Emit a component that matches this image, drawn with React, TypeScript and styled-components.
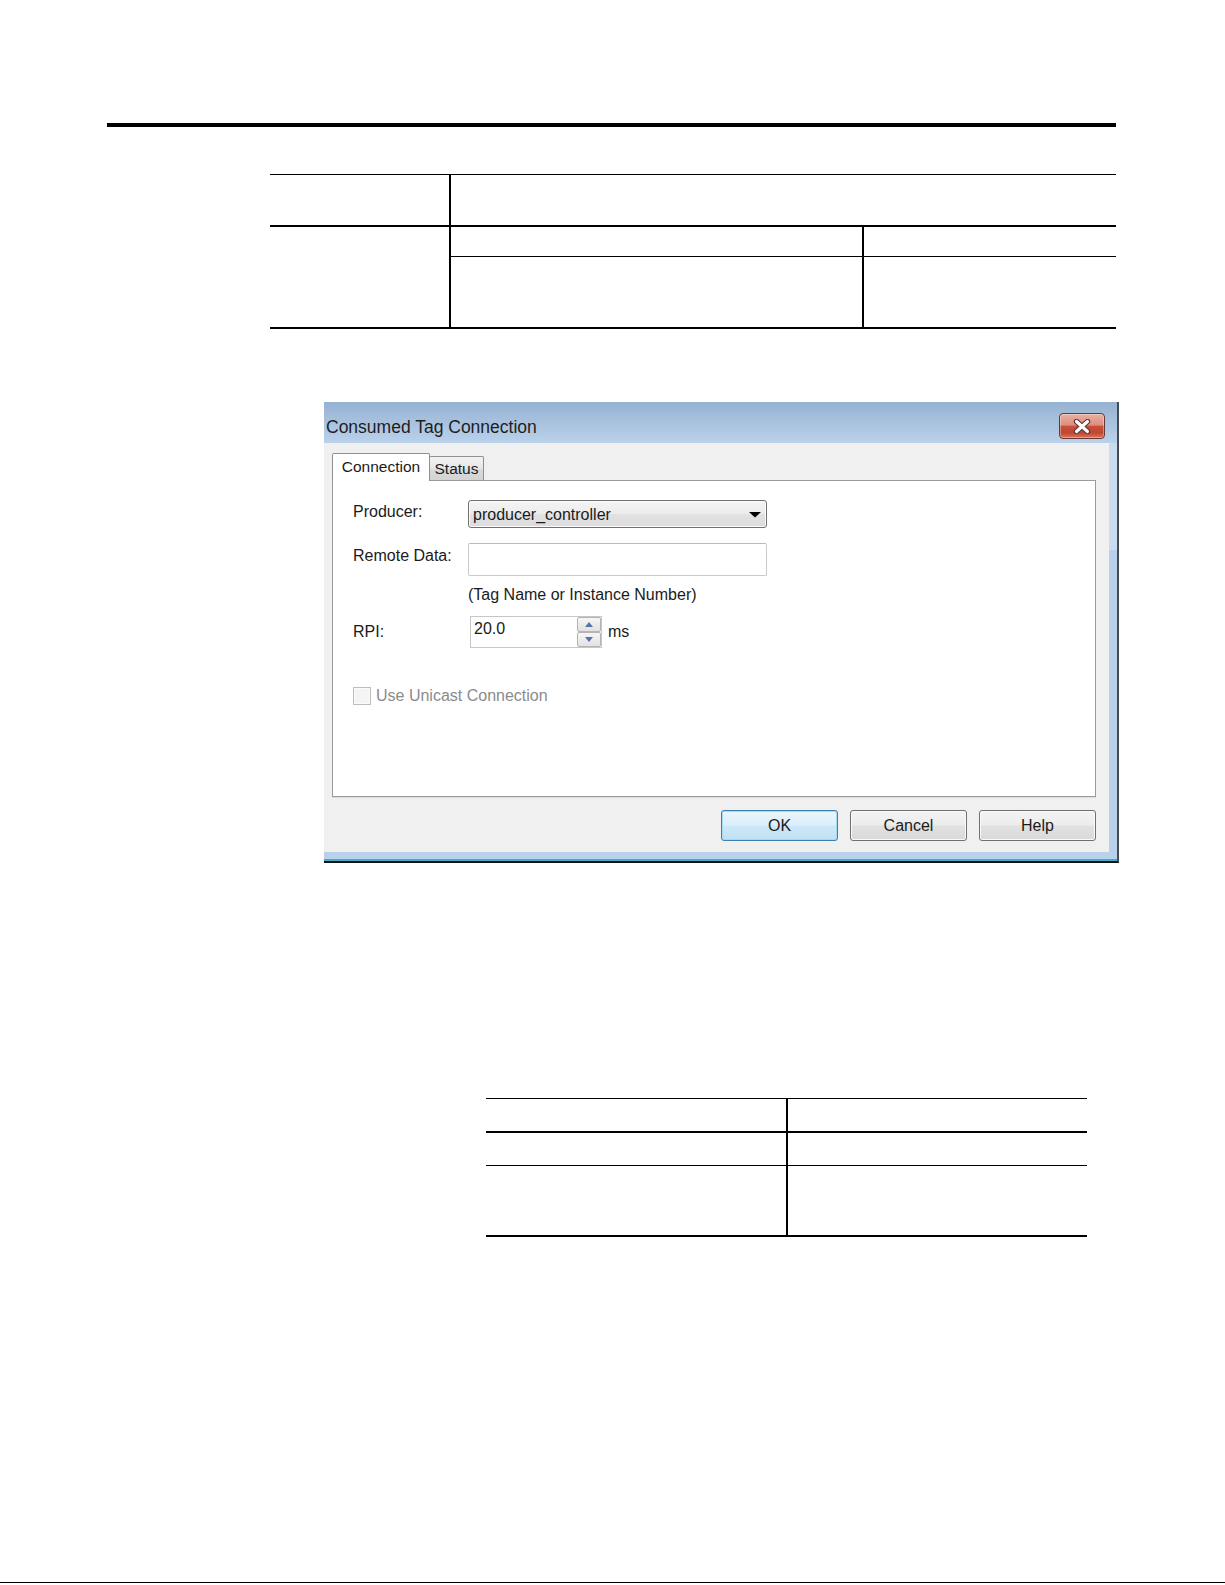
import styled, { createGlobalStyle } from "styled-components";

const GlobalStyle = createGlobalStyle`
  *, *::before, *::after { box-sizing: border-box; }
  html, body { margin: 0; padding: 0; background: #fff; }
  body { font-family: "Liberation Sans", Arial, sans-serif; color: #1b1b1b; }
`;

const Page = styled.div`
  width: 1225px;
  height: 1585px;
  padding-top: 123px;
  display: flex;
  flex-direction: column;
  align-items: flex-start;
  overflow: hidden;
`;

const TopRule = styled.div`
  margin-left: 107px;
  width: 1009px;
  height: 4px;
  background: #000;
`;

const RuleTable = styled.div<{ $left: number; $top: number; $cols: string; $rows: string }>`
  margin-left: ${({ $left }) => $left}px;
  margin-top: ${({ $top }) => $top}px;
  display: grid;
  grid-template-columns: ${({ $cols }) => $cols};
  grid-template-rows: ${({ $rows }) => $rows};
  border-top: 1px solid #000;
  border-bottom: 2px solid #000;
`;

const Cell = styled.div<{ $col: string; $row: string; $right?: number; $bottom?: number }>`
  grid-column: ${({ $col }) => $col};
  grid-row: ${({ $row }) => $row};
  border-right: ${({ $right }) => $right ?? 0}px solid #000;
  border-bottom: ${({ $bottom }) => $bottom ?? 0}px solid #000;
`;

const FooterRule = styled.div`
  margin-top: auto;
  margin-bottom: 2px;
  width: 100%;
  height: 1px;
  background: #000;
`;

/* ---------- dialog ---------- */

const Dialog = styled.div`
  margin-left: 324px;
  margin-top: 73px;
  width: 795px;
  border-right: 2px solid #434a54;
  border-bottom: 2px solid #121212;
  background: #b9d1ea;
`;

const TitleBar = styled.div`
  height: 41px;
  display: flex;
  align-items: flex-start;
  padding-right: 12px;
  background: linear-gradient(#96b2d2, #bad1ea);
`;

const Title = styled.div`
  margin-top: 15px;
  margin-left: 2px;
  font-size: 17.5px;
  line-height: 20px;
  color: #1e1e1e;
`;

const CloseButton = styled.button`
  margin-left: auto;
  margin-top: 11px;
  width: 46px;
  height: 26px;
  padding: 0;
  border: 1px solid #6b3631;
  border-radius: 4px;
  display: flex;
  align-items: center;
  justify-content: center;
  background: linear-gradient(#e9b0a4 0%, #dc8e7e 46%, #c6503a 52%, #c04630 78%, #d6785c 100%);
  box-shadow: inset 0 0 0 1px rgba(255, 255, 255, 0.35);
`;

const FrameRow = styled.div`
  display: flex;
`;

const Client = styled.div`
  width: 785px;
  height: 409px;
  padding: 10px 13px 11px 8px;
  display: flex;
  flex-direction: column;
  background: #f0f0f0;
`;

const SideFrame = styled.div`
  flex: 1;
  background: linear-gradient(to bottom, #c9dcef 0, #c9dcef 107px, #b8d0ea 107px);
`;

const BottomFrame = styled.div`
  height: 9px;
  background: #b9d1ea;
  border-bottom: 2px solid #45abc9;
`;

const TabStrip = styled.div`
  height: 27px;
  display: flex;
  align-items: flex-end;
`;

const Tab = styled.div<{ $active?: boolean; $width: number }>`
  position: relative;
  z-index: ${({ $active }) => ($active ? 1 : 0)};
  width: ${({ $width }) => $width}px;
  height: ${({ $active }) => ($active ? 28 : 24)}px;
  margin-bottom: ${({ $active }) => ($active ? -1 : 0)}px;
  margin-left: ${({ $active }) => ($active ? 0 : -1)}px;
  padding-top: ${({ $active }) => ($active ? 4 : 3)}px;
  border: 1px solid #8e9096;
  border-bottom: none;
  border-radius: 2px 2px 0 0;
  text-align: center;
  font-size: 15.5px;
  line-height: 18px;
  background: ${({ $active }) =>
    $active ? "#fff" : "linear-gradient(#f3f3f3 0%, #e6e6e6 50%, #dadada 51%, #d4d4d4 100%)"};
`;

const Panel = styled.div`
  height: 317px;
  padding: 19px 0 0 20px;
  background: #fff;
  border: 1px solid #9a9a9a;
  box-shadow: 0 1px 0 #dcdcdc;
`;

const FormRow = styled.div<{ $gap?: number }>`
  display: grid;
  grid-template-columns: 115px auto;
  align-items: start;
  margin-top: ${({ $gap }) => $gap ?? 0}px;
`;

const Label = styled.div<{ $pad: number }>`
  padding-top: ${({ $pad }) => $pad}px;
  font-size: 16px;
  line-height: 18px;
`;

const Combo = styled.div`
  width: 299px;
  height: 28px;
  padding: 5px 5px 0 4px;
  display: flex;
  justify-content: space-between;
  align-items: flex-start;
  border: 1px solid #707070;
  border-radius: 3px;
  background: linear-gradient(#f4f4f4 0%, #ececec 50%, #e2e2e2 51%, #dcdcdc 100%);
  box-shadow: inset 0 0 0 1px #fbfbfb;
  font-size: 16px;
  line-height: 18px;
`;

const ComboArrow = styled.svg`
  margin-top: 6px;
`;

const TextBox = styled.div`
  width: 299px;
  height: 33px;
  border: 1px solid #c9c9c9;
  border-top-color: #b9b9b9;
  border-radius: 2px;
  background: #fff;
`;

const Hint = styled.div`
  margin-top: 10px;
  margin-left: 115px;
  font-size: 16px;
  line-height: 18px;
`;

const SpinWrap = styled.div`
  display: flex;
  align-items: flex-start;
`;

const Spinner = styled.div`
  margin-left: 2px;
  width: 132px;
  height: 32px;
  display: flex;
  border: 1px solid #c6c6c6;
  background: #fff;
`;

const SpinValue = styled.div`
  flex: 1;
  padding: 3px 0 0 3px;
  font-size: 16px;
  line-height: 18px;
`;

const SpinButtons = styled.div`
  width: 24px;
  display: flex;
  flex-direction: column;
`;

const SpinButton = styled.div`
  height: 15px;
  display: flex;
  align-items: center;
  justify-content: center;
  border: 1px solid #b4b4b4;
  border-radius: 2px;
  background: linear-gradient(#f6f6f6, #e2e2e2);
`;

const Unit = styled.div`
  margin-left: 6px;
  padding-top: 7px;
  font-size: 16px;
  line-height: 18px;
`;

const CheckRow = styled.div`
  margin-top: 39px;
  display: flex;
  align-items: flex-start;
  gap: 5px;
`;

const CheckBox = styled.div`
  width: 18px;
  height: 18px;
  border: 1px solid #bdbdbd;
  background: #f4f4f4;
  box-shadow: inset 0 0 0 1px #fafafa;
`;

const CheckText = styled.div`
  margin-top: 0;
  font-size: 16px;
  line-height: 18px;
  color: #8b8b8b;
`;

const ButtonRow = styled.div`
  margin-top: 13px;
  display: flex;
  justify-content: flex-end;
  gap: 12px;
`;

const DialogButton = styled.button<{ $default?: boolean }>`
  width: 117px;
  height: 31px;
  padding: 1px 0 0;
  border: 1px solid ${({ $default }) => ($default ? "#3c7fb1" : "#707070")};
  border-radius: 3px;
  font-family: inherit;
  font-size: 16px;
  line-height: 18px;
  color: #1b1b1b;
  background: ${({ $default }) =>
    $default
      ? "linear-gradient(#eaf5fc 0%, #dceffb 48%, #cde8f8 52%, #bfe0f3 100%)"
      : "linear-gradient(#f4f4f4 0%, #ececec 48%, #e1e1e1 52%, #d9d9d9 100%)"};
  box-shadow: inset 0 0 0 1px ${({ $default }) => ($default ? "#a8daf0" : "#fafafa")};
`;

function CloseGlyph() {
  return (
    <svg width="18" height="15" viewBox="0 0 18 15">
      <path d="M3.5 2.5 L14.5 12.5 M14.5 2.5 L3.5 12.5" stroke="#5b3430" strokeWidth="5.4" strokeLinecap="round" fill="none" />
      <path d="M3.5 2.5 L14.5 12.5 M14.5 2.5 L3.5 12.5" stroke="#ffffff" strokeWidth="3.2" strokeLinecap="round" fill="none" />
    </svg>
  );
}

export default function App() {
  return (
    <>
      <GlobalStyle />
      <Page>
        <TopRule />

        <RuleTable $left={270} $top={47} $cols="181px 413px 252px" $rows="52px 30px 70px">
          <Cell $col="1" $row="1" $right={2} $bottom={2} />
          <Cell $col="2 / 4" $row="1" $bottom={2} />
          <Cell $col="1" $row="2 / 4" $right={2} />
          <Cell $col="2" $row="2" $right={2} $bottom={1} />
          <Cell $col="3" $row="2" $bottom={1} />
          <Cell $col="2" $row="3" $right={2} />
          <Cell $col="3" $row="3" />
        </RuleTable>

        <Dialog>
          <TitleBar>
            <Title>Consumed Tag Connection</Title>
            <CloseButton aria-label="Close">
              <CloseGlyph />
            </CloseButton>
          </TitleBar>
          <FrameRow>
            <Client>
              <TabStrip>
                <Tab $active $width={98}>Connection</Tab>
                <Tab $width={55}>Status</Tab>
              </TabStrip>
              <Panel>
                <FormRow>
                  <Label $pad={3}>Producer:</Label>
                  <Combo>
                    <span>producer_controller</span>
                    <ComboArrow width="12" height="6" viewBox="0 0 12 6">
                      <polygon points="0,0 12,0 6,5.5" fill="#000" />
                    </ComboArrow>
                  </Combo>
                </FormRow>
                <FormRow $gap={15}>
                  <Label $pad={4}>Remote Data:</Label>
                  <TextBox />
                </FormRow>
                <Hint>(Tag Name or Instance Number)</Hint>
                <FormRow $gap={12}>
                  <Label $pad={7}>RPI:</Label>
                  <SpinWrap>
                    <Spinner>
                      <SpinValue>20.0</SpinValue>
                      <SpinButtons>
                        <SpinButton>
                          <svg width="8" height="5" viewBox="0 0 8 5">
                            <polygon points="0,5 8,5 4,0" fill="#5574aa" />
                          </svg>
                        </SpinButton>
                        <SpinButton>
                          <svg width="8" height="5" viewBox="0 0 8 5">
                            <polygon points="0,0 8,0 4,5" fill="#5574aa" />
                          </svg>
                        </SpinButton>
                      </SpinButtons>
                    </Spinner>
                    <Unit>ms</Unit>
                  </SpinWrap>
                </FormRow>
                <CheckRow>
                  <CheckBox />
                  <CheckText>Use Unicast Connection</CheckText>
                </CheckRow>
              </Panel>
              <ButtonRow>
                <DialogButton $default>OK</DialogButton>
                <DialogButton>Cancel</DialogButton>
                <DialogButton>Help</DialogButton>
              </ButtonRow>
            </Client>
            <SideFrame />
          </FrameRow>
          <BottomFrame />
        </Dialog>

        <RuleTable $left={486} $top={235} $cols="302px 299px" $rows="34px 33px 69px">
          <Cell $col="1" $row="1" $right={2} $bottom={2} />
          <Cell $col="2" $row="1" $bottom={2} />
          <Cell $col="1" $row="2" $right={2} $bottom={1} />
          <Cell $col="2" $row="2" $bottom={1} />
          <Cell $col="1" $row="3" $right={2} />
          <Cell $col="2" $row="3" />
        </RuleTable>

        <FooterRule />
      </Page>
    </>
  );
}
